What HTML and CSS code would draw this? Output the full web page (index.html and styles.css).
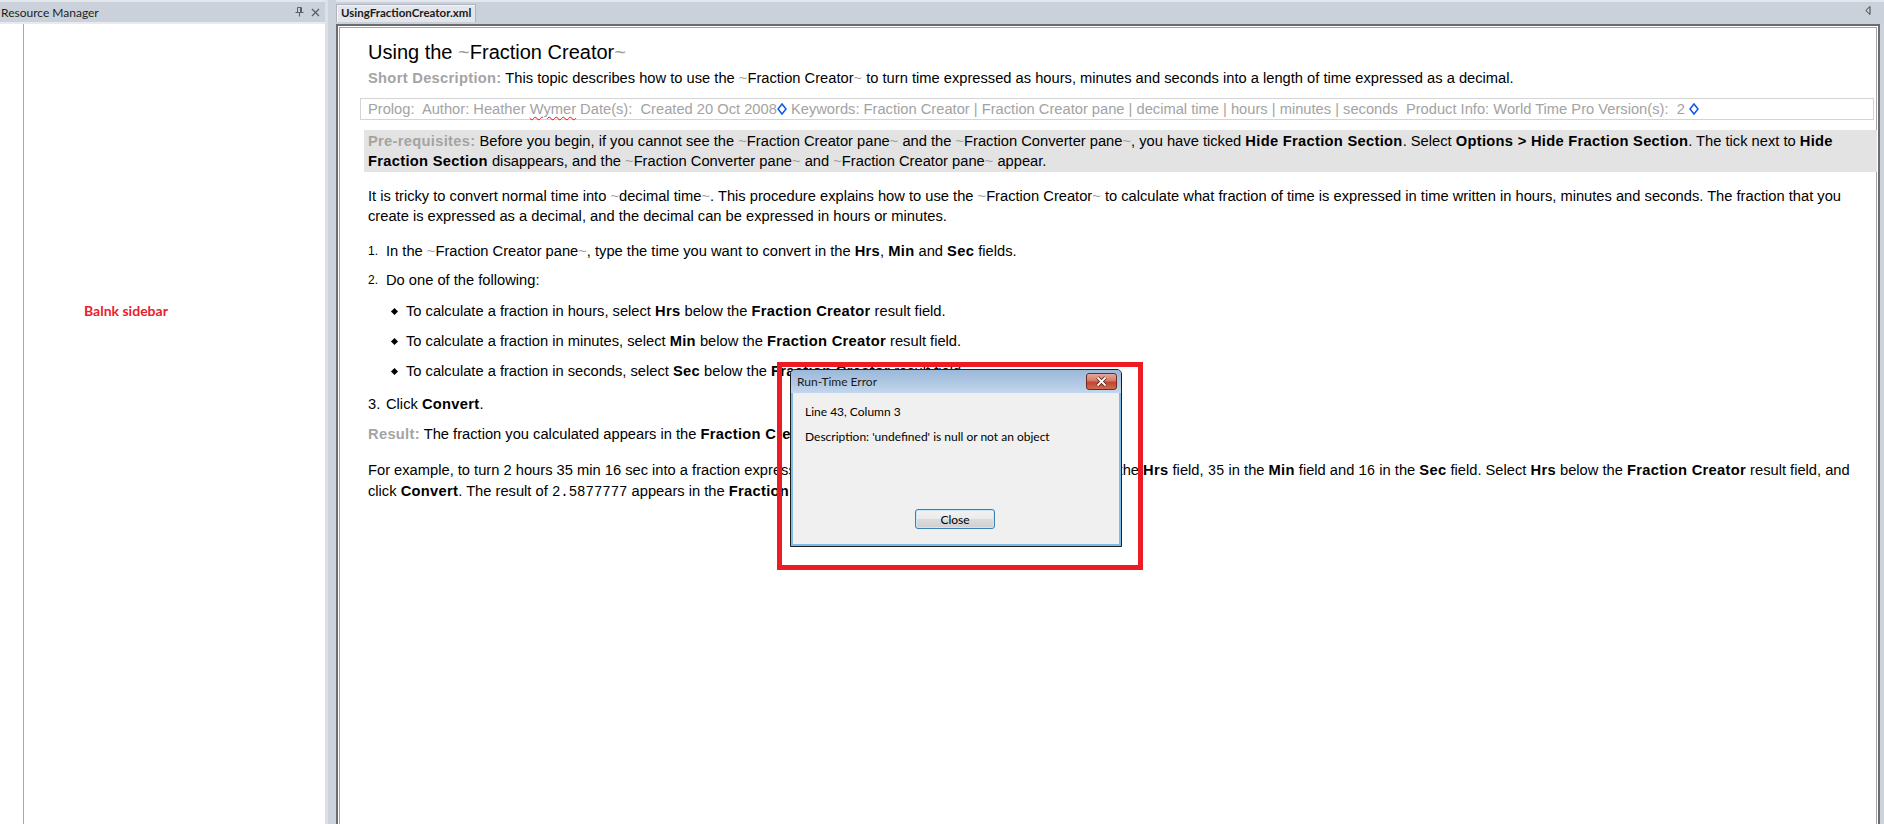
FILE: index.html
```html
<!DOCTYPE html>
<html>
<head>
<meta charset="utf-8">
<title>UsingFractionCreator.xml</title>
<link rel="stylesheet" href="styles.css">
</head>
<body>
<div class="app">
  <aside class="side">
    <div class="side-head">
      <span class="side-title">Resource Manager</span>
      <span class="side-tools">
        <svg class="ico" width="9" height="10" viewBox="0 0 9 10"><path d="M2.5 0.5h4v5h-4z M0.5 5.5h8 M4.5 5.5v4 M5.5 1v4" fill="none" stroke="#5b6068" stroke-width="1"/></svg>
        <svg class="ico" width="9" height="9" viewBox="0 0 9 9"><path d="M1 1L8 8M8 1L1 8" stroke="#5b6068" stroke-width="1.3" fill="none"/></svg>
      </span>
    </div>
    <div class="side-body">
      <div class="side-gutter"></div>
      <div class="side-main"><span class="note">Balnk sidebar</span></div>
    </div>
  </aside>
  <div class="splitter"></div>
  <main class="doc">
    <div class="tabs">
      <div class="tab">UsingFractionCreator.xml</div>
      <svg class="tab-menu" width="6" height="9" viewBox="0 0 6 9"><path d="M5 0.5L0.8 4.5L5 8.5Z" fill="none" stroke="#3d4148" stroke-width="1"/></svg>
    </div>
    <div class="frame">
      <div class="page">
        <h1 class="title">Using the <span class="t">~</span>Fraction Creator<span class="t">~</span></h1>
        <p class="shortdesc"><b class="label">Short Description:</b> This topic describes how to use the <span class="t">~</span>Fraction Creator<span class="t">~</span> to turn time expressed as hours, minutes and seconds into a length of time expressed as a decimal.</p>
        <div class="prolog">Prolog:&nbsp; Author: Heather <span class="typo">Wymer</span> Date(s):&nbsp; Created 20 Oct 2008<svg class="mark" width="10" height="12" viewBox="0 0 10 12"><path d="M5 1L9 6L5 11L1 6Z" fill="#fff" stroke="#1459f5" stroke-width="1.6"/></svg> Keywords: Fraction Creator | Fraction Creator pane | decimal time | hours | minutes | seconds&nbsp; Product Info: World Time Pro Version(s):&nbsp; 2 <svg class="mark" width="10" height="12" viewBox="0 0 10 12"><path d="M5 1L9 6L5 11L1 6Z" fill="#fff" stroke="#1459f5" stroke-width="1.6"/></svg></div>
        <div class="prereq"><b class="label">Pre-requisites:</b> Before you begin, if you cannot see the <span class="t">~</span>Fraction Creator pane<span class="t">~</span> and the <span class="t">~</span>Fraction Converter pane<span class="t">~</span>, you have ticked <b>Hide Fraction Section</b>. Select <b>Options &gt; Hide Fraction Section</b>. The tick next to <b>Hide Fraction Section</b> disappears, and the <span class="t">~</span>Fraction Converter pane<span class="t">~</span> and <span class="t">~</span>Fraction Creator pane<span class="t">~</span> appear.</div>
        <p class="para">It is tricky to convert normal time into <span class="t">~</span>decimal time<span class="t">~</span>. This procedure explains how to use the <span class="t">~</span>Fraction Creator<span class="t">~</span> to calculate what fraction of time is expressed in time written in hours, minutes and seconds. The fraction that you create is expressed as a decimal, and the decimal can be expressed in hours or minutes.</p>
        <ol class="steps">
          <li class="step"><span class="num">1.</span><span>In the <span class="t">~</span>Fraction Creator pane<span class="t">~</span>, type the time you want to convert in the <b>Hrs</b>, <b>Min</b> and <b>Sec</b> fields.</span></li>
          <li class="step step-sub"><span class="num">2.</span><span>Do one of the following:</span></li>
          <li class="choices-wrap">
            <ul class="choices">
              <li>To calculate a fraction in hours, select <b>Hrs</b> below the <b>Fraction Creator</b> result field.</li>
              <li>To calculate a fraction in minutes, select <b>Min</b> below the <b>Fraction Creator</b> result field.</li>
              <li>To calculate a fraction in seconds, select <b>Sec</b> below the <b>Fraction Creator</b> result field.</li>
            </ul>
          </li>
          <li class="step step-last"><span class="num num-big">3.</span><span>Click <b>Convert</b>.</span></li>
        </ol>
        <p class="result"><b class="label">Result:</b> The fraction you calculated appears in the <b>Fraction Creator</b> result field.</p>
        <p class="example">For example, to turn 2 hours 35 min 16 sec into a fraction expressed as the decimal of an hour, you would type <code>2</code> in the <b>Hrs</b> field, <code>35</code> in the <b>Min</b> field and <code>16</code> in the <b>Sec</b> field. Select <b>Hrs</b> below the <b>Fraction Creator</b> result field, and click <b>Convert</b>. The result of <code>2.5877777</code> appears in the <b>Fraction Creator</b> result field.</p>
      </div>
    </div>
  </main>
</div>

<div class="callout"></div>
<div class="dialog">
  <div class="dlg-title">
    <span>Run-Time Error</span>
    <span class="dlg-x"><svg width="13" height="11" viewBox="0 0 13 11"><path d="M2.5 1.5L10.5 9.5M10.5 1.5L2.5 9.5" stroke="#5a1a14" stroke-width="3.4" fill="none"/><path d="M2.5 1.5L10.5 9.5M10.5 1.5L2.5 9.5" stroke="#ffffff" stroke-width="1.8" fill="none"/></svg></span>
  </div>
  <div class="dlg-body">
    <p class="dlg-line">Line 43, Column 3</p>
    <p class="dlg-line dlg-desc">Description: 'undefined' is null or not an object</p>
    <div class="dlg-actions"><button class="dlg-btn">Close</button></div>
  </div>
</div>
</body>
</html>
```

FILE: styles.css
```css
* { box-sizing: border-box; }
html, body { margin: 0; padding: 0; }
body {
  width: 1884px;
  height: 824px;
  overflow: hidden;
  background: #cdd3dc;
  font-family: "Liberation Sans", Arial, sans-serif;
  color: #000;
}
.app { display: flex; height: 824px; }

/* left pane */
.side { width: 325px; display: flex; flex-direction: column; background: #fff; }
.side-head {
  height: 24px;
  background: #cbd1da;
  border-top: 2px solid #e3e6eb;
  border-bottom: 2px solid #e7eaee;
  display: flex;
  align-items: center;
  justify-content: space-between;
  padding: 0 5px 0 1px;
  font-family: Lato, "Liberation Sans", sans-serif;
  font-size: 12px;
  color: #1e1e1e;
}
.side-tools { display: flex; align-items: center; gap: 7px; }
.ico { display: block; }
.side-body { flex: 1; display: flex; }
.side-gutter { width: 24px; border-right: 1px solid #a9a9a9; }
.side-main { flex: 1; padding: 278px 0 0 60px; }
.note {
  font-family: Lato, "Liberation Sans", sans-serif;
  font-weight: bold;
  font-size: 14px;
  line-height: 17px;
  color: #e8202c;
}

.splitter {
  width: 11px;
  background: #cdd3dc;
  border-left: 3px solid #dde1e7;
}

/* document pane */
.doc { flex: 1; display: flex; flex-direction: column; min-width: 0; }
.tabs {
  height: 24px;
  background: #cbd1da;
  border-top: 2px solid #e3e6eb;
  display: flex;
  align-items: flex-end;
}
.tab {
  height: 18px;
  margin-bottom: 2px;
  padding: 0 4px;
  background: #e2e5ea;
  border: 1px solid #aeb5c0;
  border-bottom: none;
  box-shadow: inset 1px 1px 0 #f4f6f8;
  font-family: Lato, "Liberation Sans", sans-serif;
  font-weight: bold;
  font-size: 11.5px;
  line-height: 16px;
  color: #1a1a1a;
}
.tab-menu { margin: 0 13px 9px auto; display: block; }

.frame {
  flex: 1;
  margin-right: 4px;
  border: 2px solid #6c6c6c;
  border-bottom: none;
  padding: 1px 1px 0;
  background: #fff;
}
.page {
  height: 100%;
  border: 1px solid #a6a6a6;
  border-bottom: none;
  background: #fff;
  padding: 11px 0 0 28px;
  font-size: 14.7px;
  line-height: 20px;
}
.page b { letter-spacing: 0.3px; }

.t { color: #9c9c9c; }
.label { color: #a4a4a4; }
code { font-family: "Liberation Mono", monospace; font-size: 14px; }

.title {
  margin: 0;
  font-size: 20px;
  line-height: 26px;
  font-weight: normal;
}
.shortdesc { margin: 3px 0 0; }
.prolog {
  margin: 10px 2px 0 -8px;
  border: 1px solid #d4d4d4;
  padding: 0 7px;
  color: #a3a3a3;
  white-space: nowrap;
}
.mark { vertical-align: -1px; }
.typo {
  text-decoration: underline wavy #ee1111;
  text-decoration-thickness: 1px;
  text-underline-offset: 2px;
}
.prereq {
  margin: 10px -1px 0 -4px;
  padding: 1px 1px 1px 4px;
  background: #e3e3e3;
}
.para { margin: 14px 0 0; }

.steps { list-style: none; margin: 15px 0 0; padding: 0; }
.step { display: flex; }
.num { width: 18px; flex: none; font-size: 12px; }
.num-big { font-size: 14.7px; }
.step-sub { margin-top: 9px; }
.choices { list-style: none; margin: 11px 0 0; padding: 0 0 0 23px; }
.choices li { margin-bottom: 10px; }
.choices li::before {
  content: "";
  display: inline-block;
  width: 5px;
  height: 5px;
  background: #000;
  transform: rotate(45deg);
  margin: 0 9px 0 1px;
  vertical-align: 2px;
}
.step-last { margin-top: 13px; }
.result { margin: 10px 0 0; }
.example { margin: 16px 0 0; }

/* overlay: error dialog and red annotation */
.callout {
  position: absolute;
  left: 777px;
  top: 362px;
  width: 366px;
  height: 208px;
  border: 5px solid #ed1c24;
}
.dialog {
  position: absolute;
  left: 790px;
  top: 369px;
  width: 332px;
  height: 178px;
  border: 1px solid #1d1d1d;
  border-radius: 5px 5px 0 0;
  background: #7fbbe6;
  display: flex;
  flex-direction: column;
  font-family: Lato, "Liberation Sans", sans-serif;
  font-size: 12px;
  color: #000;
  overflow: hidden;
}
.dlg-title {
  height: 23px;
  flex: none;
  display: flex;
  align-items: center;
  justify-content: space-between;
  padding: 0 4px 0 6px;
  background: linear-gradient(#9cb8d9, #b1c9e4 60%, #c3d7ee);
  color: #1b1b1b;
}
.dlg-x {
  width: 31px;
  height: 17px;
  border: 1px solid #6d2a22;
  border-radius: 3px;
  background: linear-gradient(#e6a899, #d27a68 45%, #c2452f 55%, #cf6a4e);
  display: flex;
  align-items: center;
  justify-content: center;
}
.dlg-x svg { display: block; }
.dlg-body {
  flex: 1;
  margin: 0 2px 2px;
  background: #f0f0f0;
  display: flex;
  flex-direction: column;
  padding: 11px 0 15px 12px;
}
.dlg-line { margin: 0; line-height: 15px; }
.dlg-desc { margin-top: 10px; }
.dlg-actions { margin-top: auto; display: flex; justify-content: center; padding-right: 14px; }
.dlg-btn {
  width: 80px;
  height: 20px;
  padding: 0;
  border: 1px solid #3c7fb1;
  border-radius: 3px;
  background: linear-gradient(#f2f2f2, #ebebeb 50%, #dcdcdc 50%, #cfcfcf);
  box-shadow: inset 0 0 0 1px #c6e8fb;
  font-family: Lato, "Liberation Sans", sans-serif;
  font-size: 12px;
  color: #000;
}
```
